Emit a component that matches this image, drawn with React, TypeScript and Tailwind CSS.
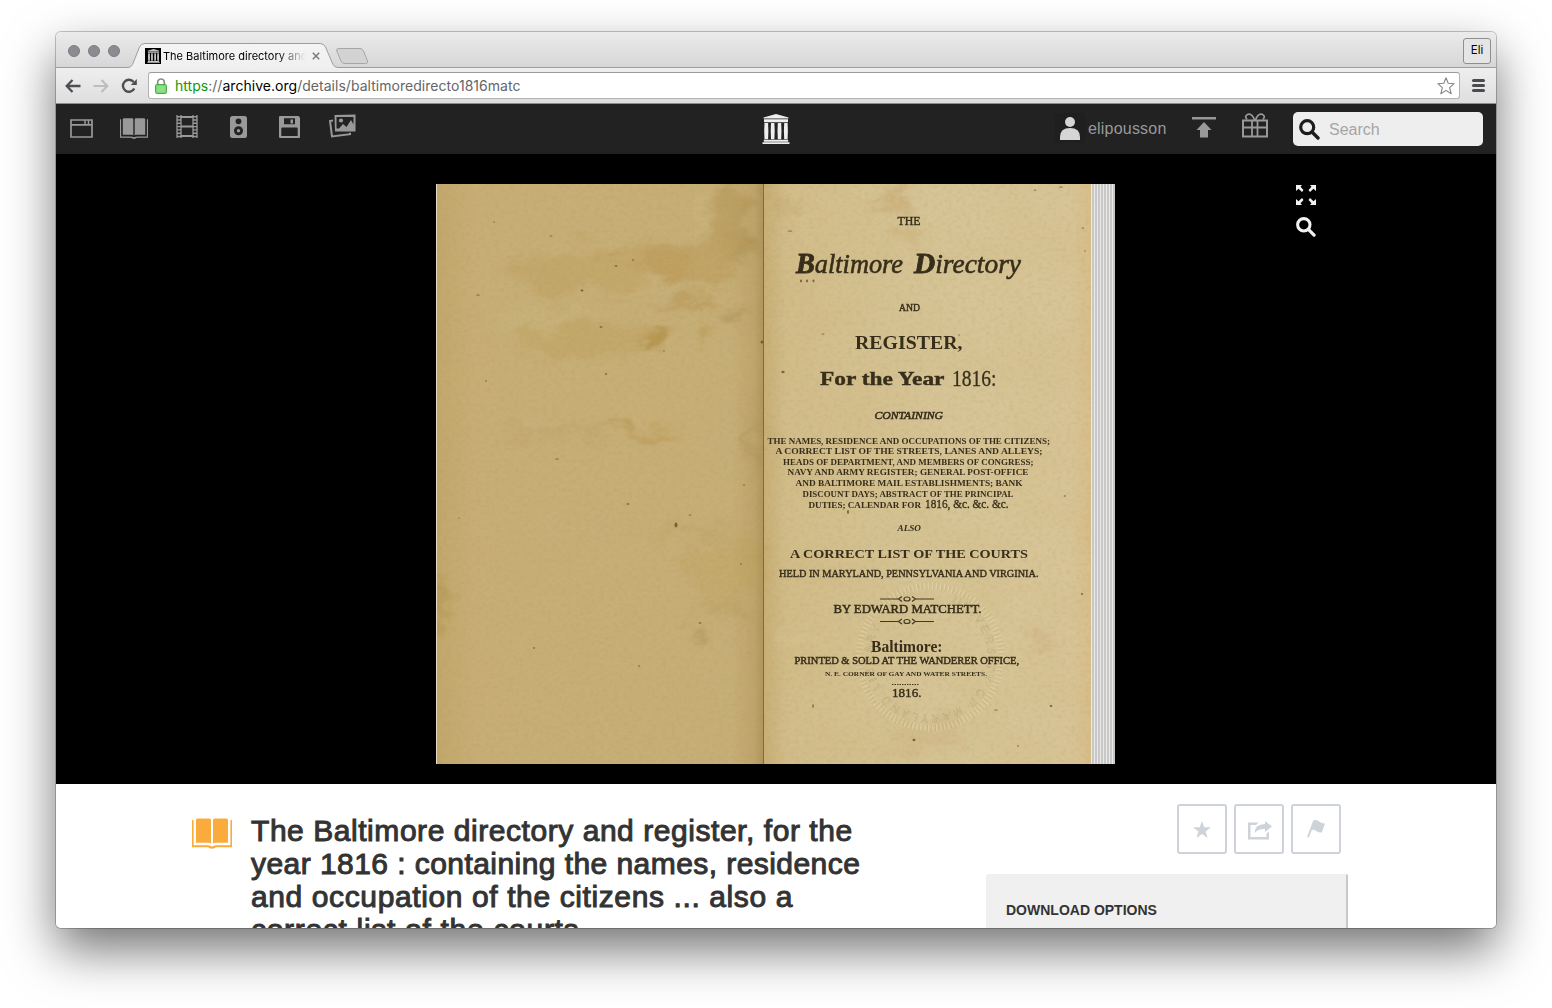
import React from "react";

type LineProps = {
  from: number;
  to: number;
  y: number;
  size: number;
  bold?: boolean;
  italic?: boolean;
  stroke?: number;
  children: React.ReactNode;
};

// One line of letterpress type, justified between two x positions.
function Line({ from, to, y, size, bold, italic, stroke = 0, children }: LineProps) {
  return (
    <text
      x={from}
      y={y}
      fontSize={size}
      fontWeight={bold ? 700 : 400}
      fontStyle={italic ? "italic" : "normal"}
      textLength={to - from}
      lengthAdjust="spacingAndGlyphs"
      stroke="#2b2312"
      strokeWidth={stroke}
    >
      {children}
    </text>
  );
}

function Ornament({ y }: { y: number }) {
  return (
    <g stroke="#3a3019" strokeWidth="1.2" fill="none">
      <path d={`M880 ${y}h18M916 ${y}h18`} />
      <path d={`M902 ${y - 2.5}l-3.5 2.5 3.5 2.5M912 ${y - 2.5}l3.5 2.5 -3.5 2.5`} />
      <ellipse cx="907" cy={y} rx="3" ry="2" />
    </g>
  );
}

const stains: [number, number, number, number, string, number][] = [
  [600, 270, 90, 22, "#b8924a", 0.3],
  [690, 265, 50, 22, "#b8904a", 0.42],
  [651, 335, 14, 9, "#a67d30", 0.65],
  [690, 305, 26, 5, "#aa8234", 0.5],
  [580, 338, 70, 18, "#bb9448", 0.3],
  [732, 316, 8, 8, "#a08040", 0.5],
  [708, 332, 9, 7, "#b08538", 0.45],
  [606, 254, 6, 5, "#a67d30", 0.5],
  [625, 429, 12, 4, "#a67d30", 0.6],
  [655, 438, 22, 8, "#b88f42", 0.5],
  [570, 432, 75, 2.5, "#a08542", 0.35],
  [732, 218, 18, 40, "#ad8a45", 0.5],
  [700, 214, 9, 25, "#cfb681", 0.6],
  [725, 570, 40, 30, "#bd9a50", 0.32],
  [722, 607, 22, 4, "#aa8640", 0.45],
  [701, 634, 6, 8, "#9b7b3c", 0.5],
  [700, 531, 45, 3, "#b08c42", 0.4],
  [752, 445, 4, 28, "#9b8245", 0.4],
  [745, 250, 8, 25, "#a08446", 0.4],
  [440, 605, 10, 20, "#a98644", 0.4],
  [545, 318, 60, 10, "#c9b781", 0.5],
  [660, 290, 30, 7, "#c7b680", 0.6],
  [570, 527, 60, 4, "#cab382", 0.45],
  [520, 420, 60, 4, "#cab382", 0.4],
  [891, 200, 20, 12, "#bd9a5c", 0.4],
  [910, 240, 10, 9, "#c5a36a", 0.4],
  [780, 205, 6, 25, "#c0a066", 0.4],
  [795, 206, 4, 3, "#ad8041", 0.7],
  [925, 730, 30, 10, "#cdb584", 0.5],
  [1045, 640, 14, 12, "#c9a676", 0.35],
  [928, 745, 38, 5, "#cf9c76", 0.35],
  [800, 640, 20, 10, "#dcc89c", 0.5],
];

const specks: [number, number, number, number][] = [
  [582, 290.5, 1.4, 1], [676, 525, 1.5, 2.4], [606, 374, 1.3, 0.8], [628, 504, 1.5, 0.8],
  [601, 327, 1.6, 0.8], [616, 266, 1.5, 0.8], [478, 295, 2, 0.6], [557, 459, 2, 0.6],
  [486, 381, 0.8, 0.8], [494, 222, 1, 0.6], [551, 236, 2, 0.4], [633, 260, 1, 0.7],
  [700, 623, 1.4, 0.7], [741, 564, 0.8, 0.8], [534, 648, 1, 0.8], [639, 666, 0.9, 0.8],
  [459, 518, 0.8, 0.6], [744, 485, 1.3, 0.5], [762, 342, 1.5, 1.5], [664, 351, 0.7, 0.7],
  [690, 515, 1.5, 0.6], [790, 231, 2.5, 0.6], [783, 372, 1.7, 1.2], [848, 512, 1, 2],
  [1065, 496, 1, 0.7], [1085, 251, 0.7, 0.7], [1061, 187, 2, 0.6], [1082, 594, 1, 1],
  [1051, 706, 1.4, 1], [914, 740, 1.5, 1.2], [996, 710, 2, 0.6], [1018, 746, 0.8, 0.8],
  [823, 334, 1.5, 0.6], [959, 335, 0.7, 0.7], [1083, 228, 1.4, 0.5], [1035, 190, 1.5, 0.6],
  [801, 281, 1, 1.4], [807, 281, 1, 1.4], [813.5, 281, 1, 1.4], [813, 706, 0.7, 2],
];

function BookScan() {
  return (
    <svg viewBox="436 184 679 580" width="679" height="580" className="block shrink-0">
      <defs>
        <filter id="fibre" x="0" y="0" width="100%" height="100%">
          <feTurbulence type="fractalNoise" baseFrequency="0.21 0.27" numOctaves="4" seed="4" />
          <feColorMatrix values="0 0 0 0 0.35  0 0 0 0 0.27  0 0 0 0 0.1  0.9 0 0 0 -0.4" />
        </filter>
        <filter id="cloud" x="0" y="0" width="100%" height="100%">
          <feTurbulence type="fractalNoise" baseFrequency="0.012 0.018" numOctaves="4" seed="9" />
          <feColorMatrix values="0 0 0 0 0.6  0 0 0 0 0.45  0 0 0 0 0.18  1.2 0 0 0 -0.5" />
        </filter>
        <filter id="soft" x="-10%" y="-10%" width="120%" height="120%">
          <feGaussianBlur stdDeviation="5" result="blurred" />
          <feTurbulence type="fractalNoise" baseFrequency="0.03 0.05" numOctaves="4" seed="2" />
          <feDisplacementMap in="blurred" scale="45" xChannelSelector="R" yChannelSelector="G" />
        </filter>
        <linearGradient id="left" x1="0" x2="1">
          <stop offset="0" stopColor="#c2a76a" />
          <stop offset="0.12" stopColor="#c7ae76" />
          <stop offset="0.9" stopColor="#c6af77" />
          <stop offset="0.97" stopColor="#bea46a" />
          <stop offset="1" stopColor="#af935a" />
        </linearGradient>
        <linearGradient id="right" x1="0" x2="1">
          <stop offset="0" stopColor="#c8af76" />
          <stop offset="0.07" stopColor="#d2bd8a" />
          <stop offset="0.5" stopColor="#d6c496" />
          <stop offset="0.94" stopColor="#d8c497" />
          <stop offset="1" stopColor="#d8be89" />
        </linearGradient>
        <pattern id="edges" x="1091" width="3" height="4" patternUnits="userSpaceOnUse">
          <rect width="3" height="4" fill="#c9c8c6" />
          <rect width="1" height="4" fill="#e9e9e9" />
        </pattern>
        <path id="ring" d="M930 599a58 58 0 0 1 0 116a58 58 0 0 1 0 -116" />
      </defs>
      <rect x="436" y="184" width="328" height="580" fill="url(#left)" />
      <rect x="764" y="184" width="328" height="580" fill="url(#right)" />
      <g filter="url(#soft)" opacity="0.8">
        {stains.map(([cx, cy, rx, ry, fill, opacity], i) => (
          <ellipse key={i} cx={cx} cy={cy} rx={rx} ry={ry} fill={fill} opacity={opacity} />
        ))}
      </g>
      <rect x="436" y="184" width="655" height="580" filter="url(#cloud)" opacity="0.3" />
      <rect x="436" y="184" width="655" height="580" filter="url(#fibre)" opacity="0.36" />
      <g fill="#5f4620" opacity="0.75">
        {specks.map(([cx, cy, rx, ry], i) => (
          <ellipse key={i} cx={cx} cy={cy} rx={rx} ry={ry} />
        ))}
      </g>
      <rect x="436" y="184" width="1" height="580" fill="#e4dccb" />
      <rect x="763" y="184" width="1" height="580" fill="#86693a" />

      {/* Embossed library seal */}
      <g opacity="0.5">
        <circle cx="930" cy="657" r="71" fill="none" stroke="#eee0b8" strokeWidth="7" strokeDasharray="1.5 2.5" opacity="0.7" />
        <circle cx="930" cy="657" r="71" fill="none" stroke="#a08a58" strokeWidth="7" strokeDasharray="0.7 3.3" strokeDashoffset="-1.5" opacity="0.5" />
        <text fontFamily="Liberation Sans" fontSize="11" fill="#efe2bd" stroke="#8a7545" strokeWidth="0.35">
          <textPath href="#ring" startOffset="22">
            <tspan letterSpacing="2.9">UNIVERSITY OF MARYLAND LIBRARY</tspan>
          </textPath>
        </text>
      </g>

      <g fill="#2b2312" opacity="0.93" fontFamily="Liberation Serif, serif">
        <Line from={897.5} to={920.5} y={224.5} size={12} stroke={0.4}>THE</Line>
        <Line from={796} to={903} y={273} size={28} italic stroke={0.6}>
          <tspan fontWeight="700" fontSize="30" strokeWidth="0.9">B</tspan>altimore
        </Line>
        <Line from={914} to={1021} y={273} size={28} italic stroke={0.6}>
          <tspan fontWeight="700" fontSize="30" strokeWidth="0.9">D</tspan>irectory
        </Line>
        <Line from={899} to={920} y={311} size={9.5} stroke={0.4}>AND</Line>
        <Line from={855} to={962.5} y={349} size={18} bold>REGISTER,</Line>
        <Line from={820} to={944.5} y={384.5} size={19} bold stroke={0.4}>For the Year</Line>
        <Line from={952} to={996.5} y={386} size={23.5} stroke={0.3}>1816:</Line>
        <Line from={874.5} to={943} y={418.5} size={10.5} italic stroke={0.5}>CONTAINING</Line>
        <Line from={767.5} to={1050} y={443.5} size={7.6} bold>THE NAMES, RESIDENCE AND OCCUPATIONS OF THE CITIZENS;</Line>
        <Line from={775.5} to={1042.5} y={454} size={7.6} bold>A CORRECT LIST OF THE STREETS, LANES AND ALLEYS;</Line>
        <Line from={783} to={1033.5} y={464.5} size={7.6} bold>HEADS OF DEPARTMENT, AND MEMBERS OF CONGRESS;</Line>
        <Line from={787.5} to={1028.5} y={475} size={7.6} bold>NAVY AND ARMY REGISTER; GENERAL POST-OFFICE</Line>
        <Line from={795.5} to={1022.5} y={486} size={7.6} bold>AND BALTIMORE MAIL ESTABLISHMENTS; BANK</Line>
        <Line from={802.5} to={1013.5} y={496.5} size={7.6} bold>DISCOUNT DAYS; ABSTRACT OF THE PRINCIPAL</Line>
        <Line from={808.5} to={921} y={507.5} size={7.6} bold>DUTIES; CALENDAR FOR</Line>
        <Line from={925} to={1008.5} y={508} size={11.5} stroke={0.3}>1816, &amp;c. &amp;c. &amp;c.</Line>
        <Line from={897.5} to={921} y={531} size={8} italic bold>ALSO</Line>
        <Line from={790} to={1028} y={558} size={13} bold>A CORRECT LIST OF THE COURTS</Line>
        <Line from={779} to={1038.5} y={577} size={10} stroke={0.4}>HELD IN MARYLAND, PENNSYLVANIA AND VIRGINIA.</Line>
        <Ornament y={599} />
        <Line from={833.5} to={981.5} y={612.5} size={12} stroke={0.5}>BY EDWARD MATCHETT.</Line>
        <Ornament y={621.5} />
        <Line from={871} to={942.5} y={651.5} size={16.5} bold>Baltimore:</Line>
        <Line from={794.5} to={1019} y={664} size={10} stroke={0.45}>PRINTED &amp; SOLD AT THE WANDERER OFFICE,</Line>
        <Line from={825} to={987} y={676} size={7} bold>N. E. CORNER OF GAY AND WATER STREETS.</Line>
        <path d="M892 684.5h27" stroke="#3a3019" strokeWidth="1" strokeDasharray="1.5 1" />
        <Line from={892} to={921.5} y={697} size={12.5} stroke={0.4}>1816.</Line>
      </g>
      <rect x="1091" y="184" width="24" height="580" fill="url(#edges)" />
    </svg>
  );
}

function BookIcon({ className }: { className: string }) {
  return (
    <svg viewBox="0 0 40 31" className={className} fill="currentColor" preserveAspectRatio="none">
      <path d="M4 1.500Q4 0.500 6 0.500H17Q19 .5 19 2V26Q18.500 24.800 17 24.800H4ZM36 1.500Q36 .5 34 .5H23Q21 .5 21 2V26Q21.500 24.800 23 24.800H36Z" />
      <path d="M0 2H1.600V27.300H15Q18 27.300 20 28.600Q22 27.300 25 27.300H38.400V2H40V29.300H25Q23 29.300 22.300 30.300Q20 31.200 17.700 30.300Q17 29.300 15 29.300H0Z" />
    </svg>
  );
}

function MuseumIcon({ className }: { className: string }) {
  return (
    <svg viewBox="0 0 28 30" className={className} fill="currentColor">
      <path d="M14 0L26.500 3.500V4.600H1.500V3.500Z" />
      <path d="M2 5.200h24v3H2z" />
      <path d="M2.500 9h3.600l.3 8-.3 8.300H2.500l-.3-8.300zM9 9h3.400l.3 8-.3 8.300H9L8.700 17zM15.800 9h3.400l.3 8-.3 8.300h-3.400l-.3-8.300zM22.200 9h3.400l.3 8-.3 8.300h-3.400l-.3-8.300z" />
      <path d="M1.800 25.800h24.400v2H1.800zM.5 28.300h27V30H.5z" />
    </svg>
  );
}

function SearchIcon({ className }: { className: string }) {
  return (
    <svg viewBox="0 0 21 21" className={className} fill="none" stroke="currentColor">
      <circle cx="8.200" cy="8.200" r="6.500" strokeWidth="3.200" />
      <path d="M13 13l6 6" strokeWidth="3.400" strokeLinecap="round" />
    </svg>
  );
}

function TabStrip() {
  return (
    <div className="relative flex h-9 items-center bg-gradient-to-b from-[#ebebeb] to-[#d6d6d6]">
      <div className="ml-3 mt-0.5 flex gap-2">
        <span className="size-3 rounded-full border border-[#7b7b80] bg-[#8b8b90]" />
        <span className="size-3 rounded-full border border-[#7b7b80] bg-[#8b8b90]" />
        <span className="size-3 rounded-full border border-[#7b7b80] bg-[#8b8b90]" />
      </div>
      <svg className="absolute left-0 top-[11px] h-[26px] w-full" fill="none">
        <defs>
          <linearGradient id="tab" x1="0" y1="0" x2="0" y2="1">
            <stop offset="0" stopColor="#f4f4f4" />
            <stop offset="1" stopColor="#efefef" />
          </linearGradient>
        </defs>
        <path d="M-2 24.500H72Q75 24.500 76.500 21.500L83.500 4Q85 .5 89 .5H264Q268 .5 269.500 4L277 21.500Q278.500 24.500 282 24.500H1442V28H-2Z" fill="url(#tab)" stroke="#9d9d9d" />
        <path d="M283 5.500H304Q306.500 5.500 307.500 8L311.500 18Q312.300 20.500 309.500 20.500H289Q286 20.500 285 18L280.800 8Q280 5.500 283 5.500Z" fill="#d3d3d3" stroke="#a6a6a6" />
      </svg>
      <div className="relative ml-[25px] mt-3 flex h-4 w-[180px] items-center">
        <span className="flex size-4 shrink-0 items-center justify-center bg-black">
          <MuseumIcon className="h-[14px] w-[13px] text-[#c6c6c6]" />
        </span>
        <span className="ml-[2px] w-[143px] overflow-hidden whitespace-nowrap bg-gradient-to-r from-black from-80% to-transparent bg-clip-text font-[Inter,sans-serif] text-[11px] leading-4 text-transparent">
          The Baltimore directory and register
        </span>
        <svg viewBox="0 0 8 8" className="ml-1.5 size-2 shrink-0" stroke="#7d7d7d" strokeWidth="1.600">
          <path d="M.8.8l6.400 6.400M7.200.8L.8 7.200" />
        </svg>
      </div>
      <div className="ml-auto mr-[5px] mt-0.5 flex h-[26px] w-7 items-center justify-center rounded-[3px] border border-[#8f8f8f] bg-[#e5e5e5] font-[Inter,sans-serif] text-[11.5px] text-black">
        Eli
      </div>
    </div>
  );
}

function AddressBar() {
  return (
    <div className="flex h-9 items-center border-b border-[#8c8c8c] bg-gradient-to-b from-[#efefef] to-[#dedede] pl-[9px]">
      <svg viewBox="0 0 16 14" className="h-[14px] w-4" fill="none" stroke="#4e4e52" strokeWidth="2.300">
        <path d="M15.500 7H2M7.500 1L1.700 7l5.800 6" />
      </svg>
      <svg viewBox="0 0 16 14" className="ml-3 h-[14px] w-4" fill="none" stroke="#bdbdbd" strokeWidth="2.100">
        <path d="M.5 7H14M8.500 1l5.800 6-5.800 6" />
      </svg>
      <svg viewBox="0 0 16 16" className="ml-3 size-4" fill="none" stroke="#4e4e52" strokeWidth="2.400">
        <path d="M13.300 10.500A6 6 0 1 1 12.600 4" />
        <path d="M15.800 1v6H9.800z" fill="#4e4e52" stroke="none" />
      </svg>
      <div className="ml-[11px] flex h-[27px] w-[1312px] items-center rounded-[3px] border border-[#b2b2b2] border-t-[#9b9b9b] bg-white">
        <svg viewBox="0 0 12 16" className="ml-1.5 h-4 w-3" fill="none">
          <path d="M2.700 7V4.300a3.300 3.300 0 0 1 6.600 0V7" stroke="#8e8e8e" strokeWidth="1.700" />
          <rect x=".6" y="6.600" width="10.800" height="8.800" rx="1" fill="#7fdc79" stroke="#3fa53d" />
          <path d="M2 9h8M2 11h8M2 13h8" stroke="#a0eb98" strokeWidth=".7" />
        </svg>
        <span className="ml-2 whitespace-nowrap font-[Inter,sans-serif] text-[14px] tracking-[0.03px] text-[#666]">
          <span className="text-[#0b9a0b]">https</span>://<span className="text-black">archive.org</span>/details/baltimoredirecto1816matc
        </span>
        <svg viewBox="0 0 18 18" className="ml-auto mr-1 size-[18px]" fill="none" stroke="#858585" strokeWidth="1.100" strokeLinejoin="round">
          <path d="M9 .8l2.200 5.500 6 .4-4.600 3.900 1.600 6.200L9 13.400l-5.200 3.400 1.600-6.200L.8 6.700l6-.4z" />
        </svg>
      </div>
      <div className="ml-3 flex flex-col gap-[2px]">
        <span className="h-[3px] w-[13px] rounded-sm bg-[#4c4c50]" />
        <span className="h-[3px] w-[13px] rounded-sm bg-[#4c4c50]" />
        <span className="h-[3px] w-[13px] rounded-sm bg-[#4c4c50]" />
      </div>
    </div>
  );
}

function MediaIcons() {
  return (
    <div className="flex h-[23px] items-center text-[#999]">
      <svg viewBox="0 0 23 19" className="mt-[3px] h-[19px] w-[23px]" fill="none" stroke="currentColor">
        <path d="M1 1h21v17H1zM1 5.800h21" strokeWidth="1.700" />
        <path d="M15 1v5M18.500 1v5" strokeWidth="1.500" />
      </svg>
      <BookIcon className="ml-[27px] mt-[3px] h-[21px] w-7" />
      <svg viewBox="0 0 22 23" className="ml-7 h-[23px] w-[22px]" fill="none" stroke="currentColor">
        <path d="M1 0v23M21 0v23M5 0v23M17 0v23" strokeWidth="1.300" />
        <path d="M3 1v22M19 1v22" strokeWidth="4" strokeDasharray="1.400 1.900" />
        <path d="M5 2h12M5 11.500h12M5 21h12" strokeWidth="2" />
      </svg>
      <svg viewBox="0 0 17 22" className="ml-8 h-[22px] w-[17px]">
        <rect width="17" height="22" rx="2.500" fill="currentColor" />
        <circle cx="8.500" cy="5.300" r="2.900" fill="#222" />
        <circle cx="8.500" cy="14.700" r="4.500" fill="#222" />
        <circle cx="8.500" cy="14.700" r="1.700" fill="currentColor" />
      </svg>
      <svg viewBox="0 0 21 22" className="ml-8 mt-px h-[22px] w-[21px]">
        <path d="M1 0h18.500L21 1.500V21q0 1-1 1H1q-1 0-1-1V1q0-1 1-1z" fill="currentColor" />
        <path d="M5 2.300h11v6H5zM2.300 12.500q0-1 1-1h14.400q1 0 1 1v7.500H2.300z" fill="#222" />
        <path d="M11.500 3.500h2.500v4h-2.500z" fill="currentColor" />
      </svg>
      <svg viewBox="0 0 28 24" className="ml-[29px] -mt-px h-6 w-7">
        <path d="M4 6.500L1 7l2 15.500 18-2.300v-1.500" fill="none" stroke="currentColor" strokeWidth="2" />
        <path d="M5.500 1l21-.5V17.500H6z" fill="currentColor" />
        <path d="M7.500 3h17v7.500l-2.500-4.500-4.500 7-3.500-3-4 4.500H7.500z" fill="#222" />
        <circle cx="12" cy="6.500" r="2.100" fill="currentColor" />
      </svg>
    </div>
  );
}

function SiteNav() {
  return (
    <nav className="grid h-[50px] grid-cols-[706px_28px_1fr] bg-[#222]">
      <div className="pl-[14px] pt-[11px]">
        <MediaIcons />
      </div>
      <MuseumIcon className="mt-2.5 h-[30px] w-7 text-[#eee]" />
      <div className="flex items-start pl-[265px] font-['Liberation_Sans',sans-serif] text-[16px] text-[#999]">
        <div className="mt-[9px] flex h-[30px] w-[30px] items-end justify-center bg-[#1f1f1f] pb-[3px]">
          <svg viewBox="0 0 20 23" className="h-[23px] w-5" fill="#d5d5d5">
            <circle cx="10" cy="5" r="5" />
            <path d="M0 23V20Q0 11 10 11T20 20V23Z" />
          </svg>
        </div>
        <span className="ml-[3px] mt-[13px] w-[77px] whitespace-nowrap leading-6 tracking-[0.2px]">elipousson</span>
        <svg viewBox="0 0 24 21" className="ml-[27px] mt-[13px] h-[21px] w-6" fill="currentColor">
          <path d="M0 0h24v2.600H0zM12 5l7.500 8H16v7.500H8V13H4.500z" />
        </svg>
        <svg viewBox="0 0 26 25" className="ml-[26px] mt-[9px] h-[25px] w-[26px]" fill="none" stroke="currentColor" strokeWidth="2">
          <path d="M1 7.500h24v16H1zM1 14.500h24" />
          <path d="M10 7v17M15.500 7v17" strokeWidth="1.800" />
          <path d="M12.500 7Q10 0 6 1.200Q2 3 5 6.500M13.500 7Q16 0 20 1.200Q24 3 21 6.500" strokeWidth="1.700" />
        </svg>
        <div className="ml-[25px] mt-2 flex h-[34px] w-[190px] items-center rounded-[5px] bg-[#eee] pl-1.5">
          <SearchIcon className="size-[21px] text-[#1d1d1d]" />
          <span className="ml-[9px] mt-0.5 text-[#a5a5a5]">Search</span>
        </div>
      </div>
    </nav>
  );
}

function Viewer() {
  return (
    <section className="flex h-[630px] bg-black pl-[380px] pt-[30px]">
      <BookScan />
      <div className="ml-[180px] flex flex-col text-[#f2f2f2]">
        <svg viewBox="0 0 22 22" className="size-[22px]" fill="currentColor">
          <path d="M1 1h6L5.500 2.800 8.500 6 7 8 3.500 4.800 1 7z" />
          <path d="M21 1h-6l1.500 1.800L13.500 6 15 8l3.500-3.200L21 7z" />
          <path d="M1 21h6l-1.500-1.800L8.500 16 7 14l-3.500 3.200L1 15z" />
          <path d="M21 21h-6l1.500-1.800L13.500 16l1.500-2 3.500 3.200L21 15z" />
        </svg>
        <SearchIcon className="ml-px mt-[11px] size-5" />
      </div>
    </section>
  );
}

function ActionButton({ children }: { children: React.ReactNode }) {
  return (
    <button className="flex size-[50px] items-center justify-center rounded-[3px] border-2 border-[#cdd3d9] text-[#cdd3d9]">
      {children}
    </button>
  );
}

function ItemDetails() {
  return (
    <section className="flex h-36 overflow-hidden bg-white font-['Liberation_Sans',sans-serif] text-[#333]">
      <BookIcon className="ml-[136px] mt-[34px] h-[31px] w-10 shrink-0 text-[#fbab3c]" />
      <h1 className="ml-[19px] mt-[30px] h-[132px] w-[640px] shrink-0 whitespace-nowrap text-[30px] leading-[33px] [-webkit-text-stroke:1px_#333]">
        <span className="block tracking-[0.55px]">The Baltimore directory and register, for the</span>
        <span className="block tracking-[0.44px]">year 1816 : containing the names, residence</span>
        <span className="block tracking-[0.61px]">and occupation of the citizens ... also a</span>
        <span className="block tracking-[0.7px]">correct list of the courts</span>
      </h1>
      <aside className="ml-[95px] mt-5 w-[362px] shrink-0">
        <div className="flex justify-end gap-[7px] pr-[7px]">
          <ActionButton>
            <svg viewBox="0 0 18 17" className="h-[17px] w-[18px]" fill="currentColor">
              <path d="M9 0l2.200 6.300H18l-5.400 4.100 2 6.600L9 13l-5.600 4 2-6.600L0 6.300h6.800z" />
            </svg>
          </ActionButton>
          <ActionButton>
            <svg viewBox="0 0 24 19" className="ml-0.5 mt-0.5 h-[19px] w-6" fill="currentColor">
              <path d="M0 1.500h11q-2 1-3 2.500H2.500v12h16V12.500l2.500-2V18.500H0z" />
              <path d="M6.500 12Q7 3.200 17 3V0l7 5.500-7 5.500V8Q10.500 7.500 6.500 12z" />
            </svg>
          </ActionButton>
          <ActionButton>
            <svg viewBox="0 0 18 18" className="h-[18px] w-[18px]" fill="currentColor">
              <path d="M6.300.5Q9-.8 12 1.500T18 3.500L14.800 12.500Q12 13 9.300 11T4.800 10L1.800 17.500 0 17z" />
            </svg>
          </ActionButton>
        </div>
        <div className="mt-5 h-[100px] rounded-[2px] border-r-2 border-[#c9c9c9] bg-[#f0f0f0] pl-5 pt-[27px] text-[14px] font-bold leading-[18px]">
          DOWNLOAD OPTIONS
        </div>
      </aside>
    </section>
  );
}

export default function App() {
  return (
    <div className="h-[1008px] w-[1552px] overflow-hidden bg-white px-14 pt-8">
      <main className="h-[896px] w-[1440px] overflow-hidden rounded-[5px] shadow-[0_0_0_1px_rgba(0,0,0,0.22),0_22px_50px_rgba(0,0,0,0.55)]">
        <TabStrip />
        <AddressBar />
        <SiteNav />
        <Viewer />
        <ItemDetails />
      </main>
    </div>
  );
}
